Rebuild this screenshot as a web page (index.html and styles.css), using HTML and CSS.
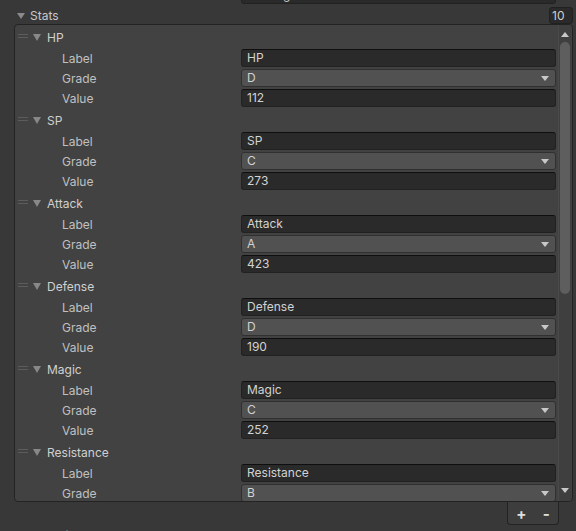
FILE: index.html
```html
<!DOCTYPE html>
<html>
<head>
<meta charset="utf-8">
<link rel="stylesheet" href="styles.css">
</head>
<body>
<div class="top-row"><div class="top-field">Starling</div></div>
<div class="stats-head">
  <span class="fold open"></span>
  <span class="stats-title">Stats</span>
  <span class="count">10</span>
</div>
<div class="list">
  <div class="content">
    <div class="elem">
      <div class="ehead"><span class="handle"></span><span class="fold open small"></span><span class="ename">HP</span></div>
      <div class="row"><span class="lbl">Label</span><span class="text">HP</span></div>
      <div class="row"><span class="lbl">Grade</span><span class="drop">D<i class="arr"></i></span></div>
      <div class="row"><span class="lbl">Value</span><span class="text">112</span></div>
    </div>
    <div class="elem">
      <div class="ehead"><span class="handle"></span><span class="fold open small"></span><span class="ename">SP</span></div>
      <div class="row"><span class="lbl">Label</span><span class="text">SP</span></div>
      <div class="row"><span class="lbl">Grade</span><span class="drop">C<i class="arr"></i></span></div>
      <div class="row"><span class="lbl">Value</span><span class="text">273</span></div>
    </div>
    <div class="elem">
      <div class="ehead"><span class="handle"></span><span class="fold open small"></span><span class="ename">Attack</span></div>
      <div class="row"><span class="lbl">Label</span><span class="text">Attack</span></div>
      <div class="row"><span class="lbl">Grade</span><span class="drop">A<i class="arr"></i></span></div>
      <div class="row"><span class="lbl">Value</span><span class="text">423</span></div>
    </div>
    <div class="elem">
      <div class="ehead"><span class="handle"></span><span class="fold open small"></span><span class="ename">Defense</span></div>
      <div class="row"><span class="lbl">Label</span><span class="text">Defense</span></div>
      <div class="row"><span class="lbl">Grade</span><span class="drop">D<i class="arr"></i></span></div>
      <div class="row"><span class="lbl">Value</span><span class="text">190</span></div>
    </div>
    <div class="elem">
      <div class="ehead"><span class="handle"></span><span class="fold open small"></span><span class="ename">Magic</span></div>
      <div class="row"><span class="lbl">Label</span><span class="text">Magic</span></div>
      <div class="row"><span class="lbl">Grade</span><span class="drop">C<i class="arr"></i></span></div>
      <div class="row"><span class="lbl">Value</span><span class="text">252</span></div>
    </div>
    <div class="elem">
      <div class="ehead"><span class="handle"></span><span class="fold open small"></span><span class="ename">Resistance</span></div>
      <div class="row"><span class="lbl">Label</span><span class="text">Resistance</span></div>
      <div class="row"><span class="lbl">Grade</span><span class="drop">B<i class="arr"></i></span></div>
      <div class="row"><span class="lbl">Value</span><span class="text">205</span></div>
    </div>
  </div>
  <div class="scrollbar">
    <i class="sarr up"></i>
    <div class="track"><div class="thumb"></div></div>
    <i class="sarr down"></i>
  </div>
</div>
<div class="footer-row">
  <div class="footer"><span class="plus">+</span><span class="minus">-</span></div>
</div>
<div class="next-head">
  <span class="fold closed"></span>
  <span class="stats-title">Potentials</span>
</div>
</body>
</html>
```

FILE: styles.css
```css
html, body {
  margin: 0;
  padding: 0;
  background: #383838;
  height: 531px;
  overflow: hidden;
}
body {
  font-family: Inter, "Liberation Sans", sans-serif;
  font-size: 12px;
  color: #c4c4c4;
}
.top-row {
  height: 4px;
  padding-left: 241px;
  display: flex;
  align-items: flex-end;
  overflow: hidden;
}
.top-field {
  flex: none;
  box-sizing: border-box;
  width: 315px;
  height: 18px;
  background: #2a2a2a;
  border: 1px solid #212121;
  border-radius: 3px;
  padding-left: 5px;
  line-height: 16px;
}
.stats-head {
  display: flex;
  align-items: center;
  height: 17px;
  margin-top: 3px;
  padding-left: 17px;
}
.fold {
  display: inline-block;
  width: 0;
  height: 0;
}
.fold.open {
  border-left: 4px solid transparent;
  border-right: 4px solid transparent;
  border-top: 6px solid #8a8a8a;
}
.fold.closed {
  border-top: 4px solid transparent;
  border-bottom: 4px solid transparent;
  border-left: 6px solid #8a8a8a;
  margin-left: 1px;
}
.stats-title {
  margin-left: 5px;
  color: #c8c8c8;
}
.count {
  margin-left: auto;
  width: 20px;
  height: 15px;
  background: #2a2a2a;
  border: 1px solid #212121;
  border-radius: 3px;
  line-height: 15px;
  padding-left: 2px;
  margin-right: 3px;
  color: #cfcfcf;
}
.list {
  margin-left: 14px;
  width: 557px;
  height: 476px;
  border: 1px solid #232323;
  border-radius: 4px;
  background: #424242;
  display: flex;
  overflow: hidden;
}
.content {
  flex: 1;
  padding-top: 2px;
  overflow: hidden;
}
.elem {
  margin-bottom: 3px;
}
.ehead {
  display: flex;
  align-items: center;
  height: 20px;
}
.handle {
  margin-left: 3px;
  width: 10px;
  height: 2px;
  border-top: 1px solid #5c5c5c;
  border-bottom: 1px solid #5c5c5c;
  margin-top: -2px;
}
.fold.small {
  margin-left: 5px;
  border-left-width: 4px;
  border-right-width: 4px;
  border-top-width: 7px;
  border-top-color: #888888;
}
.ename {
  margin-left: 6px;
  color: #d0d0d0;
}
.row {
  display: flex;
  align-items: center;
  height: 18px;
  margin-top: 2px;
}
.lbl {
  width: 179px;
  padding-left: 47px;
  color: #c0c0c0;
}
.text, .drop {
  position: relative;
  box-sizing: border-box;
  width: 315px;
  height: 18px;
  border-radius: 3px;
  padding-left: 5px;
  line-height: 16px;
  color: #d2d2d2;
}
.text {
  background: #2a2a2a;
  border: 1px solid #212121;
  border-top-color: #0f0f0f;
}
.drop {
  background: #515151;
  border: 1px solid #303030;
}
.arr {
  position: absolute;
  right: 6px;
  top: 6px;
  width: 0;
  height: 0;
  border-left: 4px solid transparent;
  border-right: 4px solid transparent;
  border-top: 5px solid #c8c8c8;
}
.scrollbar {
  width: 12px;
  margin-right: 1px;
  display: flex;
  flex-direction: column;
  align-items: center;
  background: #3f3f3f;
  border-left: 1px solid #4a4a4a;
}
.sarr {
  width: 0;
  height: 0;
  border-left: 4px solid transparent;
  border-right: 4px solid transparent;
}
.sarr.up {
  margin-top: 7px;
  border-bottom: 5px solid #c8c8c8;
}
.sarr.down {
  margin-bottom: 8px;
  border-top: 5px solid #c8c8c8;
}
.track {
  flex: 1;
  width: 100%;
  padding: 5px 1px 5px 1px;
  box-sizing: border-box;
}
.thumb {
  height: 252px;
  background: #5e5e5e;
  border-radius: 5px;
}
.footer-row {
  display: flex;
  justify-content: flex-end;
  padding-right: 17px;
}
.footer {
  width: 50px;
  height: 22px;
  border: 1px solid #232323;
  border-top: none;
  border-radius: 0 0 4px 4px;
  background: #3d3d3d;
  display: flex;
  align-items: center;
  justify-content: space-around;
  color: #e0e0e0;
  font-weight: 700;
  font-size: 15px;
}
.next-head {
  display: flex;
  align-items: center;
  height: 18px;
  margin-top: 1px;
  padding-left: 17px;
}
```
